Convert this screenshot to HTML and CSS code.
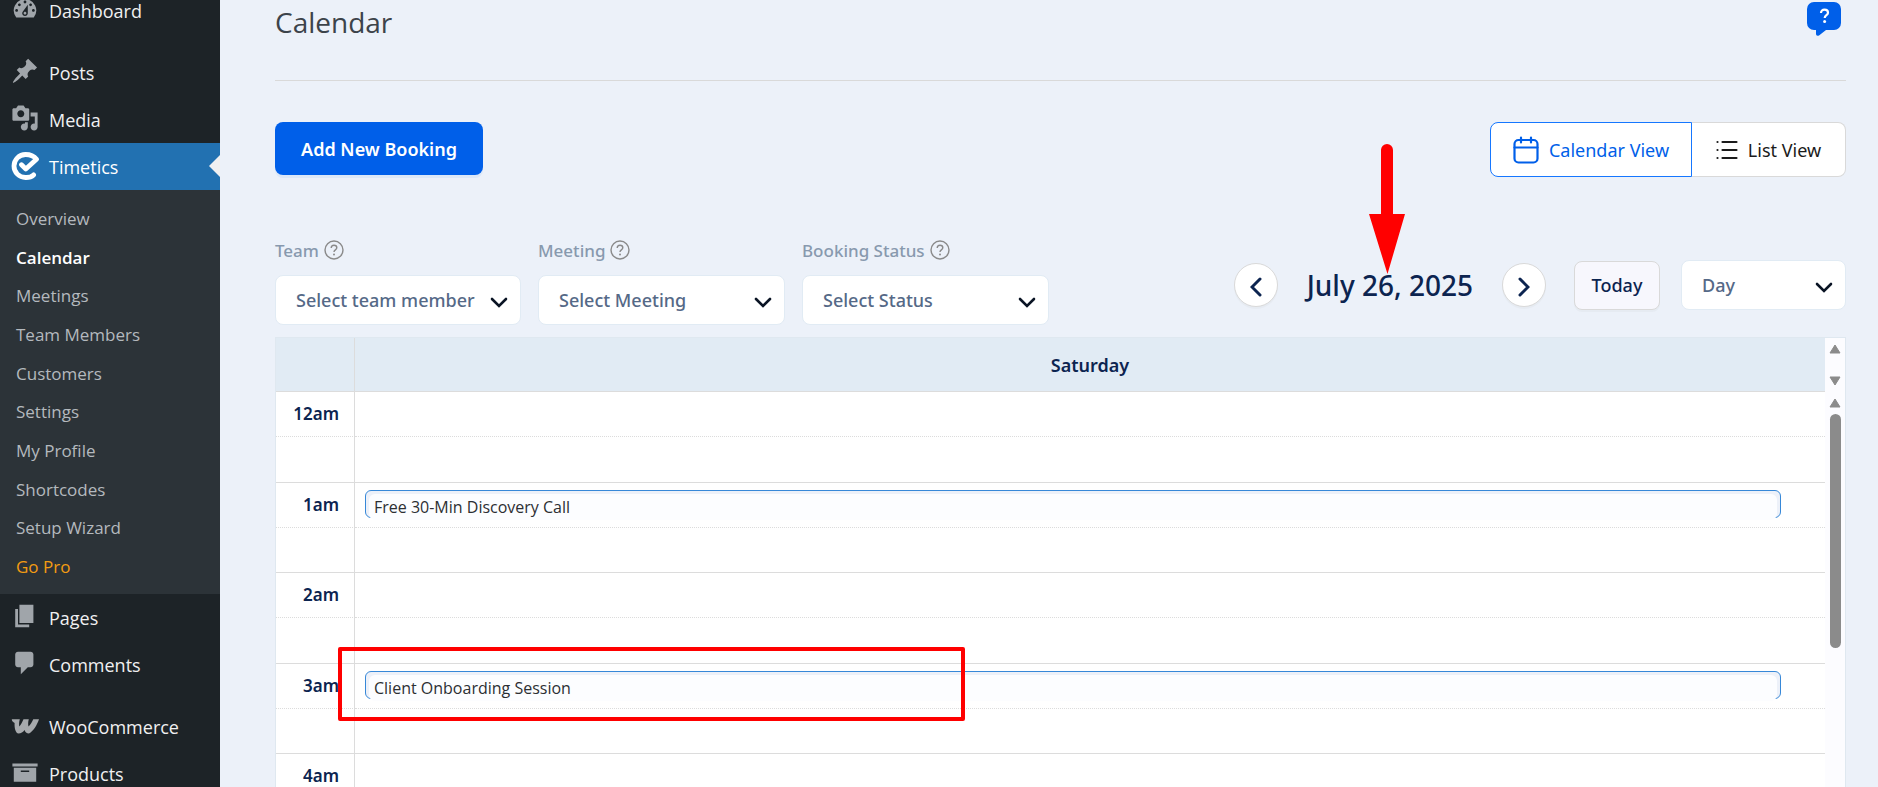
FILE: index.html
```html
<!DOCTYPE html>
<html lang="en">
<head>
<meta charset="utf-8">
<meta name="viewport" content="width=device-width, initial-scale=1">
<title>Calendar</title>
<link rel="stylesheet" href="styles.css">
</head>
<body>
<svg class="sprite" aria-hidden="true">
  <symbol id="chevron" viewBox="0 0 18 12"><path d="M2 2l7 7 7-7" fill="none" stroke="currentColor" stroke-width="2.600" stroke-linecap="round"/></symbol>
  <symbol id="help" viewBox="0 0 20 20"><circle cx="10" cy="10" r="9" fill="none" stroke="#8a8a8a" stroke-width="1.4"/><path d="M7.2 8c0-1.8 1.2-2.8 2.8-2.8s2.8 1 2.8 2.6c0 2-2.8 2.2-2.8 4.2" fill="none" stroke="#8a8a8a" stroke-width="1.4"/><circle cx="10" cy="14.6" r="1" fill="#8a8a8a"/></symbol>
</svg>
<div class="layout">
  <nav class="sidebar" aria-label="Main menu">
    <ul class="menu">
      <li><a class="menu-link" href="#"><svg class="menu-icon" viewBox="0 0 20 20"><path fill-rule="evenodd" d="M3.76 16h12.48A7.998 7.998 0 0010 3a7.998 7.998 0 00-6.24 13zM10 4c.55 0 1 .45 1 1s-.45 1-1 1-1-.45-1-1 .45-1 1-1zM6 6c.55 0 1 .45 1 1s-.45 1-1 1-1-.45-1-1 .45-1 1-1zm8 0c.55 0 1 .45 1 1s-.45 1-1 1-1-.45-1-1 .45-1 1-1zm-5.37 5.55L12 7v6c0 1.1-.9 2-2 2s-2-.9-2-2c0-.57.24-1.08.63-1.45zM4 10c.55 0 1 .45 1 1s-.45 1-1 1-1-.45-1-1 .45-1 1-1zm12 0c.55 0 1 .45 1 1s-.45 1-1 1-1-.45-1-1 .45-1 1-1zm-5 3c0-.55-.45-1-1-1s-1 .45-1 1 .45 1 1 1 1-.45 1-1z"/></svg>Dashboard</a></li>
      <li class="group-start"><a class="menu-link" href="#"><svg class="menu-icon" viewBox="0 0 20 20"><path d="M10.44 3.02l1.82-1.82 6.36 6.35-1.83 1.82c-1.05-.68-2.48-.57-3.41.36l-.75.75c-.92.93-1.04 2.35-.35 3.41l-1.83 1.82-2.41-2.41-2.8 2.79c-.42.42-3.38 2.71-3.8 2.29s1.86-3.39 2.28-3.81l2.79-2.79L4.1 9.36l1.83-1.82c1.05.69 2.48.57 3.4-.36l.75-.75c.93-.92 1.05-2.35.36-3.41z"/></svg>Posts</a></li>
      <li><a class="menu-link" href="#"><svg class="menu-icon" viewBox="0 0 20 20"><path fill-rule="evenodd" d="M13 11V4c0-.55-.45-1-1-1h-1.67L9 1H5L3.67 3H2c-.55 0-1 .45-1 1v7c0 .55.45 1 1 1h10c.55 0 1-.45 1-1zM7 4.5c1.38 0 2.5 1.12 2.5 2.5S8.38 9.5 7 9.5 4.5 8.38 4.5 7 5.62 4.5 7 4.5zM14 6h5v10.5c0 1.38-1.12 2.5-2.5 2.5S14 17.88 14 16.5s1.12-2.5 2.5-2.5c.17 0 .34.02.5.05V9h-3V6zm-4 8.05V13h2v3.5c0 1.38-1.12 2.5-2.5 2.5S7 17.88 7 16.5 8.12 14 9.5 14c.17 0 .34.02.5.05z"/></svg>Media</a></li>
      <li>
        <a class="menu-link current" href="#"><svg class="menu-icon" viewBox="0 0 28 28"><path d="M22.6 22.9C20.4 25 17.500 25.600 14.500 25.500A11.500 11.500 0 1 1 14.500 2.500C19 2.500 23 4 25.500 7.200L14.800 17l-4.300-4.200" fill="none" stroke="#fff" stroke-width="4.800" stroke-linecap="round" stroke-linejoin="round"/></svg>Timetics</a>
        <ul class="submenu">
          <li><a href="#">Overview</a></li>
          <li><a class="selected" href="#">Calendar</a></li>
          <li><a href="#">Meetings</a></li>
          <li><a href="#">Team Members</a></li>
          <li><a href="#">Customers</a></li>
          <li><a href="#">Settings</a></li>
          <li><a href="#">My Profile</a></li>
          <li><a href="#">Shortcodes</a></li>
          <li><a href="#">Setup Wizard</a></li>
          <li><a class="pro" href="#">Go Pro</a></li>
        </ul>
      </li>
      <li><a class="menu-link" href="#"><svg class="menu-icon" viewBox="0 0 20 20"><path d="M6 15V2h10v13H6zm-1 1h8v2H3V5h2v11z"/></svg>Pages</a></li>
      <li><a class="menu-link" href="#"><svg class="menu-icon" viewBox="0 0 20 20"><path d="M5 2h9c1.100 0 2 .9 2 2v7c0 1.100-.9 2-2 2h-2l-5 5v-5H5c-1.100 0-2-.9-2-2V4c0-1.100.9-2 2-2z"/></svg>Comments</a></li>
      <li class="group-start"><a class="menu-link" href="#"><svg class="menu-icon" viewBox="0 0 28 28"><path d="M.8 8.200H8.800C8 11 8 13.500 8.300 15.500C10 13.500 11.300 11 12.500 8.200H17.800C17 11 17 13.500 17.500 15.500C19.500 13.500 21 11 22.300 8.200H28C26 14 22.500 20 18 22.600C15.500 22.600 14.200 21 13.600 19C12 21 10 22.600 7.500 22.600C4.500 22 3.300 17 3.600 12C3 11 1 11 .8 8.200z" fill="#a7aaad"/></svg>WooCommerce</a></li>
      <li><a class="menu-link" href="#"><svg class="menu-icon" viewBox="0 0 20 20"><path fill-rule="evenodd" d="M19 4v2H1V4h18zM2 7h16v10H2V7zm11 3V9H7v1h6z"/></svg>Products</a></li>
    </ul>
  </nav>

  <main class="main">
    <header class="page-header">
      <h1>Calendar</h1>
      <button class="help-button" type="button" aria-label="Help"><svg viewBox="0 0 34 34" width="34" height="34"><path d="M7 0h20a7 7 0 0 1 7 7v14a7 7 0 0 1-7 7h-8l-7 5.500Q9 34.500 9 32v-4H7a7 7 0 0 1-7-7V7a7 7 0 0 1 7-7z" fill="#005fe9"/><path d="M14 11c0-2.200 1.500-3.400 3.500-3.400s3.500 1.200 3.500 3.100c0 2.400-3.300 2.500-3.300 5.200" fill="none" stroke="#fff" stroke-width="2.200"/><circle cx="17.600" cy="19.600" r="1.500" fill="#fff"/></svg></button>
    </header>

    <div class="actions">
      <button class="add-button" type="button">Add New Booking</button>
      <div class="view-switch">
        <button class="view-button active" type="button"><svg viewBox="0 0 26 28" width="26" height="28" fill="none" stroke="currentColor" stroke-width="2.200" stroke-linecap="round"><rect x="1.500" y="4" width="23" height="22.500" rx="4"/><path d="M1.500 11.500h23M8 1.500v5M18 1.500v5"/></svg>Calendar View</button>
        <button class="view-button" type="button"><svg viewBox="0 0 22 20" width="22" height="20" stroke="currentColor" stroke-width="2.200" stroke-linecap="round"><path d="M6.500 2h14M6.500 10h14M6.500 18h14M1.500 2h.01M1.500 10h.01M1.500 18h.01"/></svg>List View</button>
      </div>
    </div>

    <div class="toolbar">
      <div class="filters">
        <div class="filter">
          <label for="team">Team <svg width="20" height="20"><use href="#help"/></svg></label>
          <div class="select"><select id="team"><option>Select team member</option></select><svg class="chevron"><use href="#chevron"/></svg></div>
        </div>
        <div class="filter">
          <label for="meeting">Meeting <svg width="20" height="20"><use href="#help"/></svg></label>
          <div class="select"><select id="meeting"><option>Select Meeting</option></select><svg class="chevron"><use href="#chevron"/></svg></div>
        </div>
        <div class="filter">
          <label for="status">Booking Status <svg width="20" height="20"><use href="#help"/></svg></label>
          <div class="select"><select id="status"><option>Select Status</option></select><svg class="chevron"><use href="#chevron"/></svg></div>
        </div>
      </div>
      <div class="date-nav">
        <button class="round" type="button" aria-label="Previous day"><svg viewBox="0 0 12 20" width="12" height="20"><path d="M10 2l-8 8 8 8"/></svg></button>
        <h2 class="date">July 26, 2025
          <svg class="arrow" viewBox="0 0 36 130" width="36" height="130" aria-hidden="true"><path d="M12 70V6a6 6 0 0 1 12 0v64h12L18.500 130 0 70z" fill="#f00"/></svg>
        </h2>
        <button class="round" type="button" aria-label="Next day"><svg viewBox="0 0 12 20" width="12" height="20"><path d="M2 2l8 8-8 8"/></svg></button>
        <button class="today" type="button">Today</button>
        <div class="select range"><select aria-label="Range"><option>Day</option></select><svg class="chevron"><use href="#chevron"/></svg></div>
      </div>
    </div>

    <section class="calendar">
      <table class="day-table">
        <thead><tr><th class="time"></th><th>Saturday</th></tr></thead>
        <tbody>
          <tr><td class="time">12am</td><td></td></tr>
          <tr class="half tall"><td class="time"></td><td></td></tr>
          <tr><td class="time">1am</td><td><div class="event"><span>Free 30-Min Discovery Call</span></div></td></tr>
          <tr class="half"><td class="time"></td><td></td></tr>
          <tr><td class="time">2am</td><td></td></tr>
          <tr class="half tall"><td class="time"></td><td></td></tr>
          <tr><td class="time">3am</td><td class="marked"><div class="event"><span>Client Onboarding Session</span></div><div class="marker"></div></td></tr>
          <tr class="half"><td class="time"></td><td></td></tr>
          <tr><td class="time">4am</td><td></td></tr>
        </tbody>
      </table>
      <div class="scrollbars" aria-hidden="true">
        <div class="scroll-head">
          <svg viewBox="0 0 12 10" width="12" height="10"><path d="M6 1l5 8H1z"/></svg>
          <svg viewBox="0 0 12 10" width="12" height="10"><path d="M6 9l5-8H1z"/></svg>
        </div>
        <div class="scroll-body">
          <svg viewBox="0 0 12 10" width="12" height="10"><path d="M6 1l5 8H1z"/></svg>
          <div class="thumb"></div>
        </div>
      </div>
    </section>
  </main>
</div>
</body>
</html>
```
FILE: styles.css
```css
* { box-sizing: border-box; }
body {
  margin: 0;
  background: #ecf1f9;
  color: #0c2450;
  font-family: "Segoe UI", "Open Sans", sans-serif;
  font-size: 17px;
}
button, select { font: inherit; color: inherit; }
button { cursor: pointer; }
ul { list-style: none; margin: 0; padding: 0; }
a { text-decoration: none; color: inherit; }
.sprite { position: absolute; width: 0; height: 0; }

.layout { display: flex; height: 100vh; overflow: hidden; }

/* Sidebar */
.sidebar { flex: 0 0 220px; background: #1d2327; color: #f0f0f1; overflow: hidden; }
.menu { margin-top: -13px; }
.menu-link {
  display: flex;
  align-items: center;
  gap: 10px;
  height: 47px;
  padding: 0 11px;
  font-size: 18px;
}
.menu-icon { width: 28px; height: 28px; margin-bottom: 4px; fill: #a0a5aa; }
.group-start { margin-top: 15px; }
.current { position: relative; background: #2271b1; color: #fff; }
.current .menu-icon { margin-bottom: 2px; }
.current::after {
  content: "";
  position: absolute;
  right: 0;
  top: 12px;
  border: 11px solid transparent;
  border-left: 0;
  border-right-color: #f0f0f1;
}
.submenu {
  display: grid;
  grid-auto-rows: 1fr;
  height: 404px;
  padding: 9px 16px 8px;
  background: #2c3338;
  color: #b4b9be;
  font-size: 17px;
}
.submenu li { display: flex; align-items: center; }
.submenu .selected { color: #fff; font-weight: 600; }
.submenu .pro { color: #f39c12; }

/* Page */
.main {
  flex: 1;
  min-width: 0;
  display: flex;
  flex-direction: column;
  padding: 0 32px 0 55px;
  font-family: "Segoe UI", "Noto Sans", sans-serif;
  font-size: 18px;
}
.page-header {
  display: flex;
  justify-content: space-between;
  align-items: flex-start;
  height: 81px;
  padding: 2px 5px 0 0;
  border-bottom: 1px solid #d9d9d9;
}
h1 { margin: 0; font-family: "Segoe UI", "Open Sans", sans-serif; font-size: 28px; line-height: 40px; font-weight: 400; color: #3c434a; }
.help-button { padding: 0; border: 0; background: none; }
.actions { display: flex; justify-content: space-between; align-items: flex-start; margin-top: 41px; }
.add-button {
  height: 53px;
  min-width: 208px;
  padding: 0 20px;
  border: 0;
  border-radius: 8px;
  background: #005fe9;
  box-shadow: 0 3px 0 #dce8f8;
  color: #fff;
  font-weight: 600;
}
.view-switch { display: flex; }
.view-button {
  display: flex;
  align-items: center;
  justify-content: center;
  gap: 10px;
  height: 55px;
  min-width: 154px;
  padding: 0 20px;
  border: 1px solid #d9d9d9;
  border-left: 0;
  border-radius: 0 8px 8px 0;
  background: #fff;
  color: #1b1b1b;
}
.view-button.active { min-width: 202px; border: 1px solid #1677ff; border-radius: 8px 0 0 8px; color: #005fe9; }

.toolbar { display: flex; justify-content: space-between; align-items: flex-end; margin-top: 61px; }
.filters { display: flex; gap: 17px; }
.filter { display: grid; gap: 13px; width: 246px; }
.filter + .filter { width: 247px; }
.filter label {
  display: flex;
  align-items: center;
  gap: 5px;
  height: 24px;
  font-size: 17px;
  font-weight: 500;
  color: #8899ae;
}
.select { position: relative; height: 50px; }
.select select {
  appearance: none;
  width: 100%;
  height: 100%;
  padding: 0 40px 0 20px;
  border: 1px solid #e1ebf4;
  border-radius: 8px;
  background: #fff;
  color: #556987;
  font-weight: 500;
}
.chevron { position: absolute; right: 13px; top: 22px; width: 18px; height: 12px; color: #0a1424; pointer-events: none; }
.date-nav { display: flex; align-items: center; margin-bottom: 15px; }
.round {
  display: grid;
  place-items: center;
  width: 44px;
  height: 44px;
  padding: 4px 0 0;
  border: 1px solid #d9d9d9;
  border-radius: 50%;
  background: #fff;
  box-shadow: 0 2px 0 #e6ebf2;
}
.round svg { fill: none; stroke: #0c2450; stroke-width: 3; stroke-linecap: round; }
.date { position: relative; margin: 0 29px; font-size: 28px; line-height: 44px; font-weight: 500; white-space: nowrap; }
.arrow { position: absolute; left: 62px; top: -119px; }
.today {
  width: 86px;
  height: 49px;
  margin: 0 21px 0 28px;
  padding: 0;
  border: 1px solid #d9d9d9;
  border-radius: 8px;
  background: #f7f7fd;
  box-shadow: 0 2px 0 #e6ebf2;
  font-weight: 500;
}
.range { width: 165px; }

/* Day grid */
.calendar {
  flex: 1;
  min-height: 0;
  display: flex;
  align-items: flex-start;
  margin-top: 12px;
  border: 1px solid #dfe8f0;
  border-bottom: 0;
  background: #fff;
}
.day-table { flex: 1; border-collapse: separate; border-spacing: 0; table-layout: fixed; }
.day-table th { height: 53px; padding: 0; background: #e1ebf4; font-weight: 600; }
.day-table td { height: 45px; padding: 0; border-top: 1px solid #dcdcdc; vertical-align: top; }
.day-table .tall td { height: 46px; }
.day-table .half td { border-top-style: dotted; }
.day-table .time { width: 79px; padding-right: 15px; border-right: 1px solid #dcdcdc; text-align: right; font-size: 17px; line-height: 44px; font-weight: 600; }
.event {
  height: 28px;
  margin: 7px 44px 0 10px;
  padding: 3px 3px 0;
  border: 1px solid #3788d8;
  border-radius: 6px;
  background: #edf1f9;
}
.event span {
  display: block;
  height: 26px;
  padding-left: 5px;
  border-radius: 6px;
  background: #fcfdff;
  color: #2c2f33;
  font-family: "Segoe UI", "Open Sans", sans-serif;
  font-size: 16px;
  line-height: 26px;
}
.marked { position: relative; }
.marker {
  position: absolute;
  left: -17px;
  top: -17px;
  width: 627px;
  height: 74px;
  border: 4px solid #f00;
  border-radius: 2px;
}
.scrollbars { flex: 0 0 20px; align-self: stretch; background: #fcfcff; fill: #8b8b8b; }
.scroll-head { display: flex; flex-direction: column; align-items: center; justify-content: space-between; height: 53px; padding: 6px 0 5px; }
.scroll-body { display: flex; flex-direction: column; align-items: center; gap: 6px; padding-top: 7px; }
.scrollbars svg { stroke: #8b8b8b; stroke-linejoin: round; }
.thumb { width: 11px; height: 234px; border-radius: 6px; background: #8b8b8b; }
```
